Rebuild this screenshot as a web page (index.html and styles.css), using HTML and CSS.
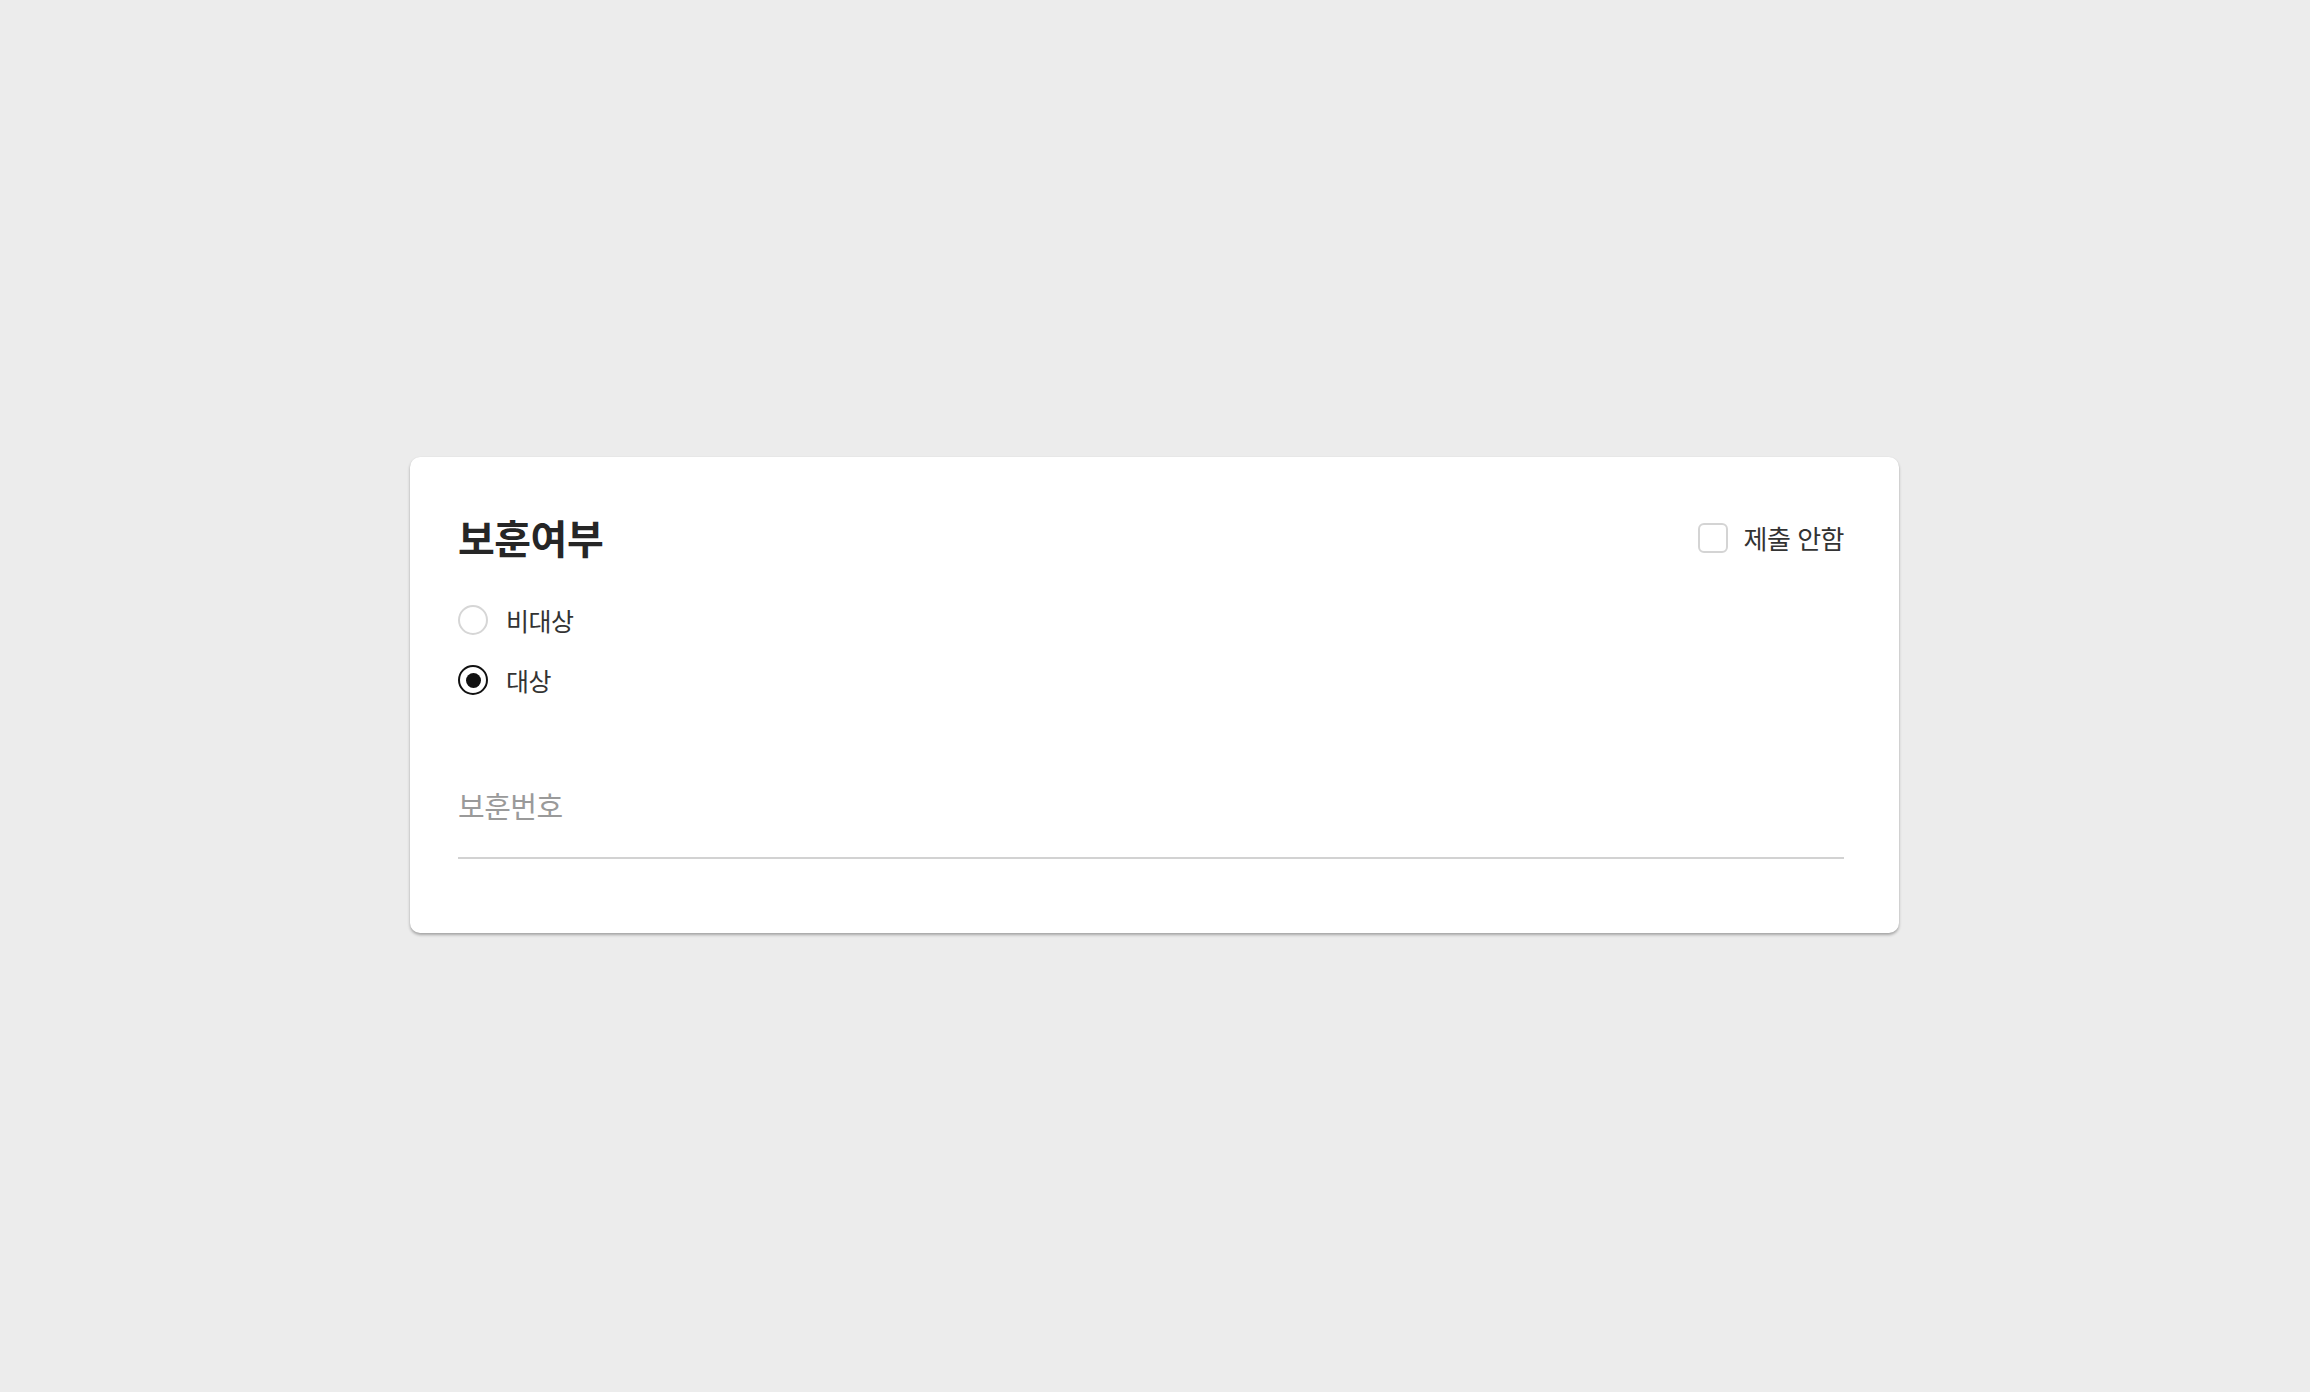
FILE: index.html
```html
<!DOCTYPE html>
<html lang="ko">
<head>
<meta charset="utf-8">
<link rel="stylesheet" href="styles.css">
</head>
<body>
<div class="page">
  <section class="card">
    <div class="head">
      <h1 class="title">보훈여부</h1>
      <label class="check">
        <span class="box"></span>
        <span class="check-label">제출 안함</span>
      </label>
    </div>
    <div class="radios">
      <label class="radio">
        <span class="circle"></span>
        <span class="radio-label">비대상</span>
      </label>
      <label class="radio">
        <span class="circle on"><span class="dot"></span></span>
        <span class="radio-label">대상</span>
      </label>
    </div>
    <div class="field">
      <span class="placeholder">보훈번호</span>
    </div>
  </section>
</div>
</body>
</html>
```
FILE: styles.css
```css
* { box-sizing: border-box; }
html, body {
  margin: 0;
  padding: 0;
  width: 2310px;
  height: 1392px;
  background: #ececec;
  font-family: "Noto Sans CJK KR", "Noto Sans", sans-serif;
  color: #222;
}
.page {
  display: flex;
  justify-content: flex-start;
  padding: 457px 0 0 410px;
}
.card {
  width: 1489px;
  height: 476px;
  background: #fff;
  border-radius: 10px;
  box-shadow: 0 2px 3px rgba(0,0,0,0.3), 0 0 1px rgba(0,0,0,0.08);
  padding: 54px 55px 0 48px;
  display: flex;
  flex-direction: column;
}
.head {
  display: flex;
  justify-content: space-between;
  align-items: center;
  height: 56px;
}
.title {
  margin: 0;
  font-size: 40px;
  font-weight: 700;
  letter-spacing: -0.5px;
  color: #262626;
  line-height: 56px;
  margin-top: -4px;
}
.check {
  display: flex;
  align-items: center;
  gap: 16px;
  margin-top: -3px;
}
.box {
  width: 30px;
  height: 30px;
  border: 2px solid #d4d4d4;
  border-radius: 6px;
}
.check-label {
  font-size: 26px;
  color: #333;
  letter-spacing: -0.5px;
}
.radios {
  display: flex;
  flex-direction: column;
  gap: 30px;
  margin-top: 38px;
}
.radio {
  display: flex;
  align-items: center;
  gap: 18px;
  height: 30px;
}
.circle {
  width: 30px;
  height: 30px;
  border: 2px solid #d6d6d6;
  border-radius: 50%;
  display: flex;
  align-items: center;
  justify-content: center;
}
.circle.on {
  border: 2.5px solid #111;
}
.dot {
  width: 15px;
  height: 15px;
  border-radius: 50%;
  background: #111;
}
.radio-label {
  font-size: 25px;
  color: #333;
  letter-spacing: -0.5px;
}
.field {
  margin-top: 91px;
  border-bottom: 2px solid #d2d2d2;
  height: 73px;
  display: flex;
  align-items: flex-start;
}
.placeholder {
  font-size: 29px;
  color: #9a9a9a;
  letter-spacing: -0.5px;
  line-height: 38px;
}
```
